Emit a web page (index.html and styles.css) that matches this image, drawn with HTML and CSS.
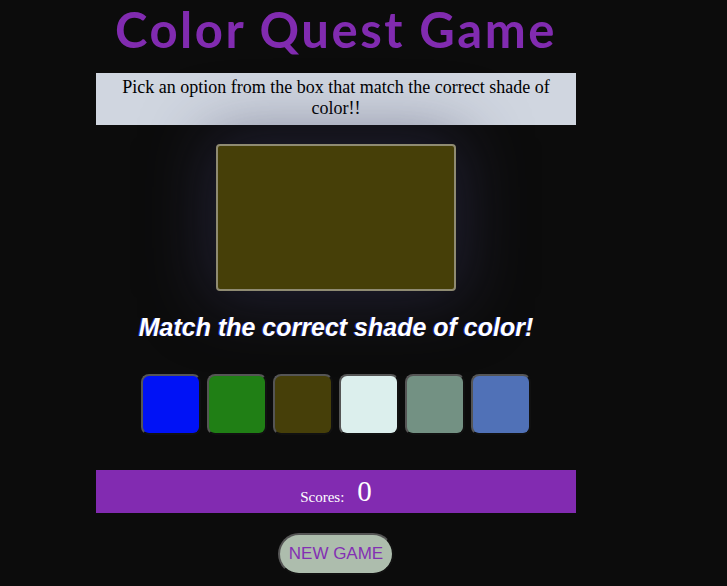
FILE: index.html
```html
<!DOCTYPE html>
<html>
<head>
<meta charset="utf-8">
<link rel="stylesheet" href="styles.css">
</head>
<body>
<main class="game">
  <h1 class="title">Color Quest Game</h1>
  <p class="intro">Pick an option from the box that match the correct shade of color!!</p>
  <div class="target"></div>
  <h2 class="prompt">Match the correct shade of color!</h2>
  <div class="options">
    <button class="opt" style="background:#0012f6"></button>
    <button class="opt" style="background:#207f15"></button>
    <button class="opt" style="background:#463f09"></button>
    <button class="opt" style="background:#dcefed"></button>
    <button class="opt" style="background:#739183"></button>
    <button class="opt" style="background:#5071b7"></button>
  </div>
  <div class="score">
    <span class="score-label">Scores:</span>
    <span class="score-value">0</span>
  </div>
  <div class="actions">
    <button class="new-game">NEW GAME</button>
  </div>
</main>
</body>
</html>
```
FILE: styles.css
```css
html, body {
  margin: 0;
  padding: 0;
  background: #0c0c0c;
}
.game {
  width: 480px;
  margin-left: 96px;
  display: flex;
  flex-direction: column;
  align-items: center;
}
.title {
  margin: 0;
  height: 73px;
  font-family: "Lato", sans-serif;
  font-weight: 700;
  font-size: 49px;
  line-height: 58px;
  letter-spacing: 2.5px;
  color: #812bb0;
  text-align: center;
  white-space: nowrap;
}
.intro {
  align-self: stretch;
  margin: 0;
  padding: 4px 20px 2px;
  height: 46px;
  background: #d0d6e0;
  font-family: "Liberation Serif", serif;
  font-size: 18px;
  line-height: 21px;
  color: #000;
  text-align: center;
}
.target {
  margin-top: 19px;
  width: 236px;
  height: 143px;
  background: #463f08;
  border: 2px solid #8f8b72;
  border-radius: 4px;
  box-shadow: 0 0 65px 8px rgba(50, 48, 80, 0.55);
}
.prompt {
  margin: 22px 0 0;
  font-family: "Liberation Sans", sans-serif;
  font-style: italic;
  font-weight: 700;
  font-size: 25px;
  line-height: 28px;
  color: #fff;
  text-shadow: -1px 0 0 rgba(42, 60, 255, 0.7);
}
.options {
  margin-top: 33px;
  display: flex;
  gap: 6px;
}
.opt {
  width: 60px;
  height: 61px;
  border: 2px solid;
  border-color: #555 #111 #111 #555;
  border-radius: 8px;
  padding: 0;
}
.score {
  align-self: stretch;
  margin-top: 35px;
  height: 43px;
  background: #822bb1;
  display: flex;
  justify-content: center;
  align-items: flex-end;
  gap: 13px;
  font-family: "Liberation Serif", serif;
  color: #fff;
  padding-bottom: 7px;
  box-sizing: border-box;
}
.score-label {
  font-size: 15px;
  line-height: 17px;
}
.score-value {
  font-size: 29px;
  line-height: 29px;
}
.actions {
  margin-top: 20px;
}
.new-game {
  width: 116px;
  height: 42px;
  background: #adbdad;
  border: 2px solid;
  border-color: #555 #111 #111 #555;
  border-radius: 21px;
  font-family: "Liberation Sans", sans-serif;
  font-size: 17px;
  color: #8330b3;
  padding: 0;
}
```
